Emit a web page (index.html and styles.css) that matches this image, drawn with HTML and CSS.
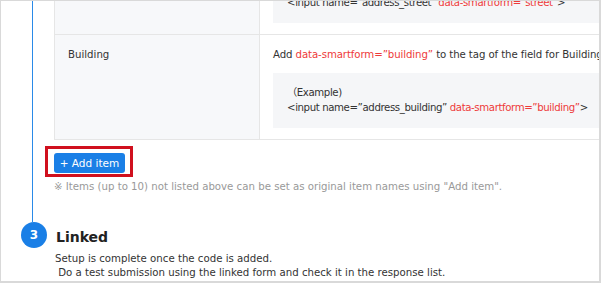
FILE: index.html
```html
<!DOCTYPE html>
<html lang="en">
<head>
  <meta charset="UTF-8">
  <title>Smart form setup</title>
  <link rel="stylesheet" href="styles.css">
</head>
<body>
  <div class="frame">
    <div class="step step-fields">
      <table class="field-table">
        <tr>
          <th>Street</th>
          <td>
            <p>Add <span class="attr">data-smartform="street"</span> to the tag of the field for Street</p>
            <div class="code">
              <div>(Example)</div>
              <div>&lt;input name="address_street" <span class="attr">data-smartform="street"</span>&gt;</div>
            </div>
          </td>
        </tr>
        <tr>
          <th>Building</th>
          <td>
            <p>Add <span class="attr">data-smartform=”building”</span> to the tag of the field for Building</p>
            <div class="code">
              <div>（Example)</div>
              <div>&lt;input name=”address_building” <span class="attr">data-smartform=”building”</span>&gt;</div>
            </div>
          </td>
        </tr>
      </table>
      <div class="highlight">
        <button class="btn-add">+ Add item</button>
      </div>
      <p class="note">※ Items (up to 10) not listed above can be set as original item names using "Add item".</p>
    </div>
    <div class="step step-linked">
      <div class="step-head">
        <span class="step-num">3</span>
        <h3>Linked</h3>
      </div>
      <p class="step-text">Setup is complete once the code is added.<br>&nbsp;Do a test submission using the linked form and check it in the response list.</p>
    </div>
  </div>
</body>
</html>
```

FILE: styles.css
```css
* {
  margin: 0;
  padding: 0;
  box-sizing: border-box;
}
body {
  font-family: 'DejaVu Sans', 'Noto Sans CJK JP', sans-serif;
  font-size: 10.2px;
  color: #333;
  background: #fff;
}
.frame {
  width: 601px;
  height: 283px;
  border: 1px solid #d9d9d9;
  border-right-width: 2px;
  border-bottom-width: 2px;
  overflow: hidden;
}
.step-fields {
  margin-left: 31px;
  border-left: 1px solid #2a8ae8;
  padding-left: 21px;
  padding-bottom: 27px;
}
.field-table {
  width: 620px;
  margin-top: -72px;
  border-collapse: collapse;
}
.field-table th,
.field-table td {
  border: 1px solid #e6e6e6;
  vertical-align: top;
  text-align: left;
  font-weight: normal;
}
.field-table th {
  width: 205px;
  background: #f7f8fa;
  padding: 12px 13px;
  line-height: 15px;
}
.field-table td {
  padding: 12px 13px 11px;
  line-height: 15px;
}
.field-table p {
  margin-bottom: 11px;
  white-space: nowrap;
  letter-spacing: -0.1px;
}
.code {
  background: #f5f6f8;
  padding: 12px 14px 13px;
  white-space: nowrap;
  letter-spacing: -0.4px;
}
.attr {
  color: #ee3a3a;
}
.highlight {
  display: inline-block;
  margin: 6px 0 0 -9px;
  padding: 4px 5px 1px 6px;
  border: 3px solid #d0101e;
}
.btn-add {
  display: block;
  width: 71px;
  height: 20px;
  border: none;
  border-radius: 3px;
  background: #1a7fe6;
  color: #fff;
  font-family: inherit;
  font-size: 10.5px;
}
.note {
  margin-top: 2px;
  color: #999;
  line-height: 16px;
}
.step-head {
  display: flex;
  align-items: center;
  margin-left: 20px;
  gap: 9px;
}
.step-num {
  width: 26px;
  height: 26px;
  border-radius: 50%;
  background: #1a7fe6;
  color: #fff;
  font-weight: bold;
  font-size: 12px;
  display: flex;
  align-items: center;
  justify-content: center;
}
.step-head h3 {
  font-size: 14px;
  font-weight: bold;
  color: #222;
  margin-top: 3px;
}
.step-text {
  margin: 4px 0 0 54px;
  line-height: 14px;
}
```
